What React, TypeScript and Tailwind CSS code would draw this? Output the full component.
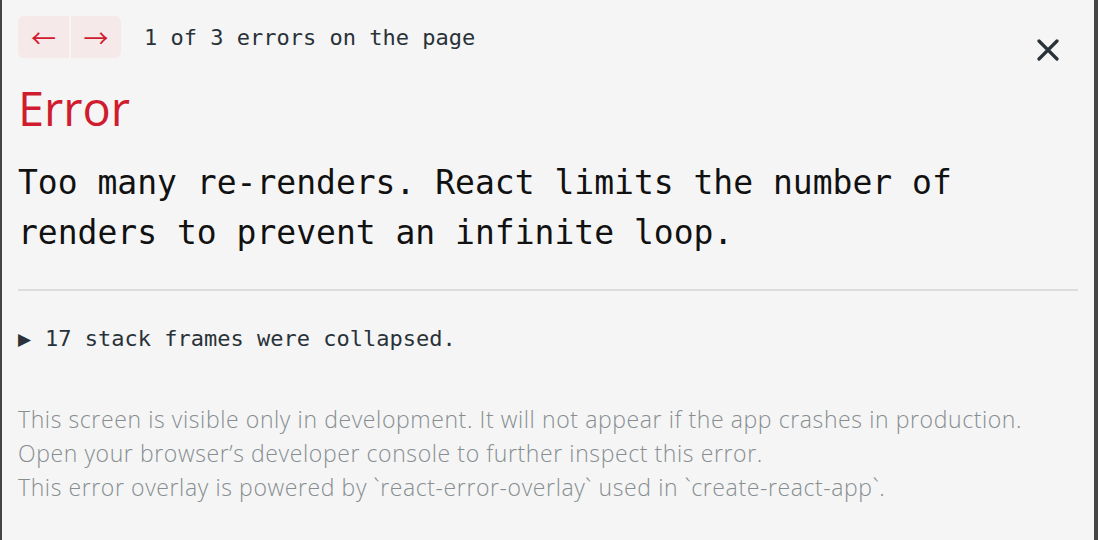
import React from "react";

const mono = "font-['DejaVu_Sans_Mono','Liberation_Mono',monospace]";

export default function App() {
  return (
    <div className="w-[1098px] h-[540px] bg-[#444] flex">
      <div className="ml-[2px] mr-[4px] flex-1 bg-[#f5f5f5] relative px-4 pt-4 overflow-hidden">
        {/* top bar */}
        <div className="flex items-center h-[42px]">
          <div className="flex gap-[2px]">
            <button className="w-[51px] h-[42px] bg-[#f5e9ea] rounded-l-[6px] text-[#d01c2f] text-[25px] leading-none flex items-center justify-center font-['Noto_Sans_CJK_JP',sans-serif]">
              ←
            </button>
            <button className="w-[50px] h-[42px] bg-[#f5e9ea] rounded-r-[6px] text-[#d01c2f] text-[25px] leading-none flex items-center justify-center font-['Noto_Sans_CJK_JP',sans-serif]">
              →
            </button>
          </div>
          <span className={`ml-[23px] text-[22px] text-[#293238] ${mono}`}>
            1 of 3 errors on the page
          </span>
        </div>

        <button className="absolute right-[35px] top-[39px] w-[22px] h-[22px]">
          <svg viewBox="0 0 22 22" width="22" height="22">
            <path d="M2 2 L20 20 M20 2 L2 20" stroke="#293238" strokeWidth="3.2" strokeLinecap="round" />
          </svg>
        </button>

        <h1 className="mt-[22px] text-[47px] leading-[56px] text-[#d01c2f] font-['Open_Sans','Noto_Sans',sans-serif] font-normal">
          Error
        </h1>

        <div className={`mt-[22px] text-[33px] leading-[50px] text-[#111] ${mono} whitespace-pre-wrap`}>
          Too many re-renders. React limits the number of renders to prevent an infinite loop.
        </div>

        <div className="mt-[31px] h-[2px] bg-[#dcdcdc]" />

        <div className={`mt-[34px] text-[22px] leading-[28px] text-[#293238] flex items-center ${mono}`}>
          <span className="text-[17px] mr-[14px] font-['DejaVu_Sans',sans-serif]">▶</span>
          17 stack frames were collapsed.
        </div>

        <div className="mt-[49px] text-[23px] tracking-[0.6px] leading-[34px] text-[#878e91] font-['Open_Sans','Noto_Sans',sans-serif] font-light">
          <div>This screen is visible only in development. It will not appear if the app crashes in production.</div>
          <div>Open your browser’s developer console to further inspect this error.</div>
          <div>This error overlay is powered by `react-error-overlay` used in `create-react-app`.</div>
        </div>
      </div>
    </div>
  );
}
